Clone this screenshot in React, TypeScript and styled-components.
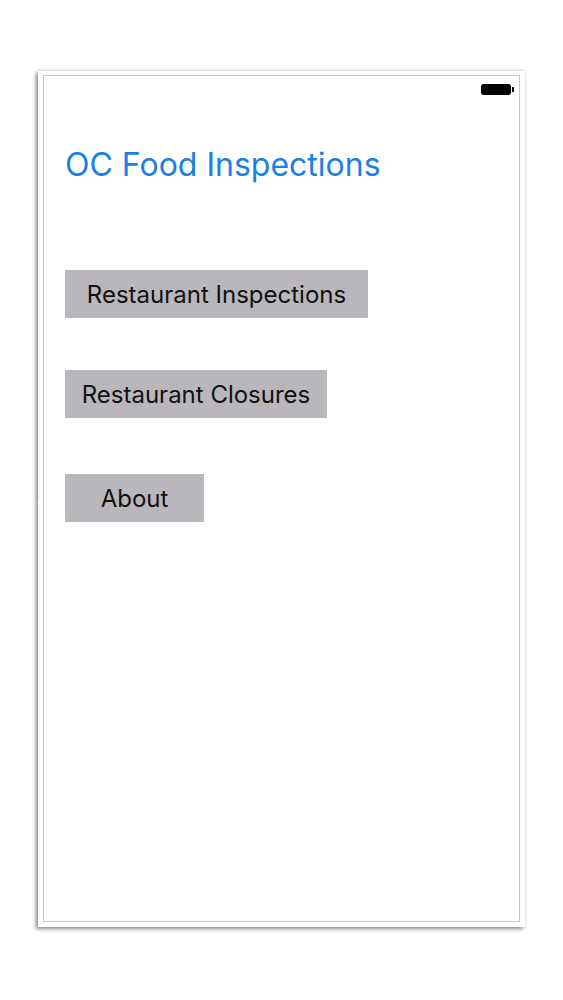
import React from 'react'
import styled, { createGlobalStyle } from 'styled-components'

const GlobalStyle = createGlobalStyle`
  html, body {
    margin: 0;
    padding: 0;
    background: #ffffff;
  }
  body {
    font-family: Inter, "Liberation Sans", Arial, sans-serif;
  }
`

const Page = styled.div`
  width: 563px;
  height: 1000px;
  padding: 71px 0 0 38px;
  box-sizing: border-box;
`

const Device = styled.div`
  position: relative;
  width: 487px;
  height: 856px;
  box-sizing: border-box;
  padding: 4px 5px 5px 5px;
  background: #ffffff;
  box-shadow: -2px 2px 4px rgba(0, 0, 0, 0.45), 0 -1px 3px rgba(0, 0, 0, 0.15);
`

const Screen = styled.div`
  height: 100%;
  box-sizing: border-box;
  border: 1px solid #c9c8cc;
  display: flex;
  flex-direction: column;
  padding: 0 0 0 21px;
`

const StatusBar = styled.div`
  display: flex;
  justify-content: flex-end;
  padding: 8px 8px 0 0;
  height: 20px;
`

const Battery = styled.div`
  position: relative;
  width: 30px;
  height: 11px;
  border-radius: 3px;
  background: #000;
  &::after {
    content: '';
    position: absolute;
    right: -3px;
    top: 3px;
    width: 2px;
    height: 5px;
    border-radius: 0 1px 1px 0;
    background: #000;
  }
`

const Title = styled.h1`
  margin: 43px 0 0 0;
  font-size: 32px;
  font-weight: 400;
  color: #1b7fe3;
  line-height: 36px;
`

const Buttons = styled.div`
  display: flex;
  flex-direction: column;
  align-items: flex-start;
  margin-top: 87px;
`

const GrayButton = styled.button<{ $w: number; $gap: number }>`
  width: ${(p) => p.$w}px;
  height: 48px;
  margin-top: ${(p) => p.$gap}px;
  border: none;
  background: #b9b7bb;
  color: #111;
  font-family: inherit;
  font-size: 24px;
  text-align: center;
  padding: 0;
`

const SideNub = styled.div`
  position: absolute;
  left: -2px;
  top: 424px;
  width: 0;
  height: 0;
  border-top: 3px solid transparent;
  border-bottom: 3px solid transparent;
  border-left: 3px solid #b0b0b0;
`

export default function App() {
  return (
    <>
      <GlobalStyle />
      <Page>
        <Device>
          <SideNub />
          <Screen>
            <StatusBar>
              <Battery />
            </StatusBar>
            <Title>OC Food Inspections</Title>
            <Buttons>
              <GrayButton $w={303} $gap={0}>Restaurant Inspections</GrayButton>
              <GrayButton $w={262} $gap={52}>Restaurant Closures</GrayButton>
              <GrayButton $w={139} $gap={56}>About</GrayButton>
            </Buttons>
          </Screen>
        </Device>
      </Page>
    </>
  )
}
